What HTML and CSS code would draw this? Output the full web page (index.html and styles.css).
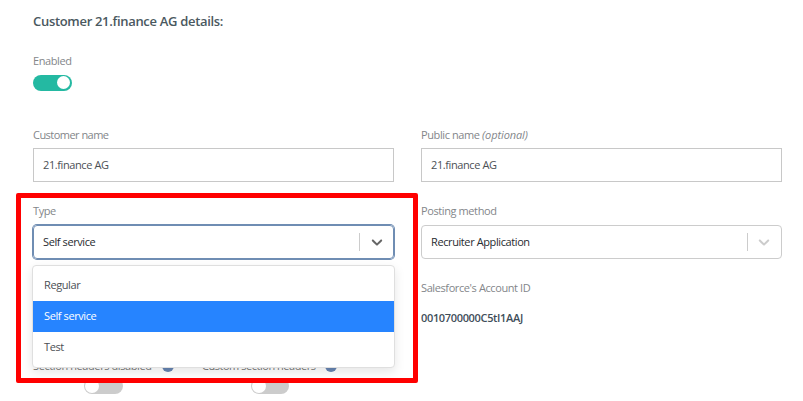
FILE: index.html
```html
<!DOCTYPE html>
<html lang="en">
<head>
<meta charset="utf-8">
<title>Customer details</title>
<link rel="stylesheet" href="styles.css">
</head>
<body>
<main class="page">
  <h1 class="title">Customer 21.finance AG details:</h1>
  <div class="enabled">
    <span class="label">Enabled</span>
    <span class="toggle on"></span>
  </div>
  <div class="grid">
    <div class="field">
      <span class="label tight">Customer name</span>
      <div class="input">21.finance AG</div>
    </div>
    <div class="field">
      <span class="label">Public name <i>(optional)</i></span>
      <div class="input">21.finance AG</div>
    </div>
    <div class="field type">
      <span class="label">Type</span>
      <div class="select focused">
        <span class="value">Self service</span>
        <span class="divider"></span>
        <svg class="chevron" viewBox="0 0 20 20"><path d="M4.516 7.548c0.436-0.446 1.043-0.481 1.576 0l3.908 3.747 3.908-3.747c0.533-0.481 1.141-0.446 1.574 0 0.436 0.445 0.408 1.197 0 1.615-0.406 0.418-4.695 4.502-4.695 4.502-0.217 0.223-0.502 0.335-0.787 0.335s-0.57-0.112-0.789-0.335c0 0-4.287-4.084-4.695-4.502s-0.436-1.17 0-1.615z"/></svg>
      </div>
      <div class="menu">
        <div class="option">Regular</div>
        <div class="option selected">Self service</div>
        <div class="option">Test</div>
      </div>
    </div>
    <div class="field">
      <span class="label">Posting method</span>
      <div class="select">
        <span class="value">Recruiter Application</span>
        <span class="divider"></span>
        <svg class="chevron" viewBox="0 0 20 20"><path d="M4.516 7.548c0.436-0.446 1.043-0.481 1.576 0l3.908 3.747 3.908-3.747c0.533-0.481 1.141-0.446 1.574 0 0.436 0.445 0.408 1.197 0 1.615-0.406 0.418-4.695 4.502-4.695 4.502-0.217 0.223-0.502 0.335-0.787 0.335s-0.57-0.112-0.789-0.335c0 0-4.287-4.084-4.695-4.502s-0.436-1.17 0-1.615z"/></svg>
      </div>
    </div>
    <div class="switches">
      <div class="switch first">
        <div class="switch-label">Section headers disabled<span class="info"></span></div>
        <span class="toggle"></span>
      </div>
      <div class="switch second">
        <div class="switch-label">Custom section headers<span class="info"></span></div>
        <span class="toggle"></span>
      </div>
    </div>
    <div class="field">
      <span class="label">Salesforce's Account ID</span>
      <strong class="account">0010700000C5tI1AAJ</strong>
    </div>
  </div>
</main>
<div class="highlight"></div>
</body>
</html>
```

FILE: styles.css
```css
* { box-sizing: border-box; }
body {
  margin: 0;
  height: 401px;
  overflow: hidden;
  position: relative;
  background: #fff;
  color: #4c5055;
  font: 11px/17px "Open Sans", "Noto Sans", sans-serif;
  letter-spacing: -0.4px;
}
.page { padding: 11px 21px 0 33px; }
.title {
  margin: 0;
  font-size: 13px;
  line-height: 20px;
  font-weight: 600;
  color: #4a5860;
  letter-spacing: -0.31px;
}
.enabled { margin-top: 22px; height: 74px; }
.label { display: block; height: 17px; line-height: 15px; color: #83868a; white-space: nowrap; }
.label i { letter-spacing: -0.1px; }
.tight { letter-spacing: -0.53px; }
.toggle {
  display: block;
  width: 39px;
  height: 16px;
  padding: 1px;
  border-radius: 8px;
  background: #ccc;
}
.toggle::before {
  content: "";
  display: block;
  width: 14px;
  height: 14px;
  border-radius: 50%;
  background: #fff;
}
.toggle.on { margin-top: 5px; background: #24b9a2; }
.toggle.on::before { width: 13px; height: 13px; margin-left: 23px; }
.grid {
  display: grid;
  grid-template-columns: 361px 361px;
  grid-template-rows: 76px 77px 110px;
  column-gap: 27px;
}
.field { min-width: 0; }
.input {
  height: 34px;
  margin-top: 4px;
  padding: 0 9px;
  border: 1px solid #c8c8c8;
  line-height: 31px;
}
.select {
  display: flex;
  align-items: center;
  height: 34px;
  margin-top: 5px;
  padding: 0 8px 0 9px;
  border: 1px solid #ccc;
  border-radius: 4px;
  color: #282c30;
}
.focused { padding-right: 7px; border-color: #6f8db3; box-shadow: 0 0 0 1px #6f8db3; }
.value { flex: 1; padding-bottom: 2px; white-space: nowrap; }
.divider { width: 1px; height: 18px; margin-right: 7px; background: #ccc; }
.chevron { width: 18px; height: 18px; fill: #ccc; }
.focused .divider { margin-right: 8px; }
.focused .chevron { fill: #666; }
.type { position: relative; z-index: 1; }
.menu {
  position: absolute;
  top: 62px;
  left: -1px;
  width: 363px;
  padding: 4px 0;
  height: 103px;
  border: 1px solid #dfdfdf;
  border-radius: 4px;
  background: #fff;
  box-shadow: 0 4px 11px rgba(0, 0, 0, .1);
}
.option { height: 31px; padding: 0 11px; line-height: 29px; }
.option.selected { background: #2684ff; color: #fff; }
.switches { display: flex; padding-top: 77px; }
.switch.first { width: 169px; }
.switch-label { display: flex; align-items: center; height: 17px; white-space: nowrap; color: #777; }
.info { width: 12px; height: 12px; margin-left: 10px; border-radius: 50%; background: #6684b2; }
.switch .toggle { margin: 4px 0 0 51px; }
.switch.second .switch-label { letter-spacing: -0.47px; }
.switch.second .toggle { width: 38px; margin-left: 49px; }
.account { display: block; margin-top: 12px; color: #3f4e5a; font-weight: 600; letter-spacing: -0.34px; }
.highlight {
  position: absolute;
  z-index: 2;
  left: 16px;
  top: 193px;
  width: 402px;
  height: 190px;
  border: 5px solid #f00;
  border-radius: 2px;
}
```
